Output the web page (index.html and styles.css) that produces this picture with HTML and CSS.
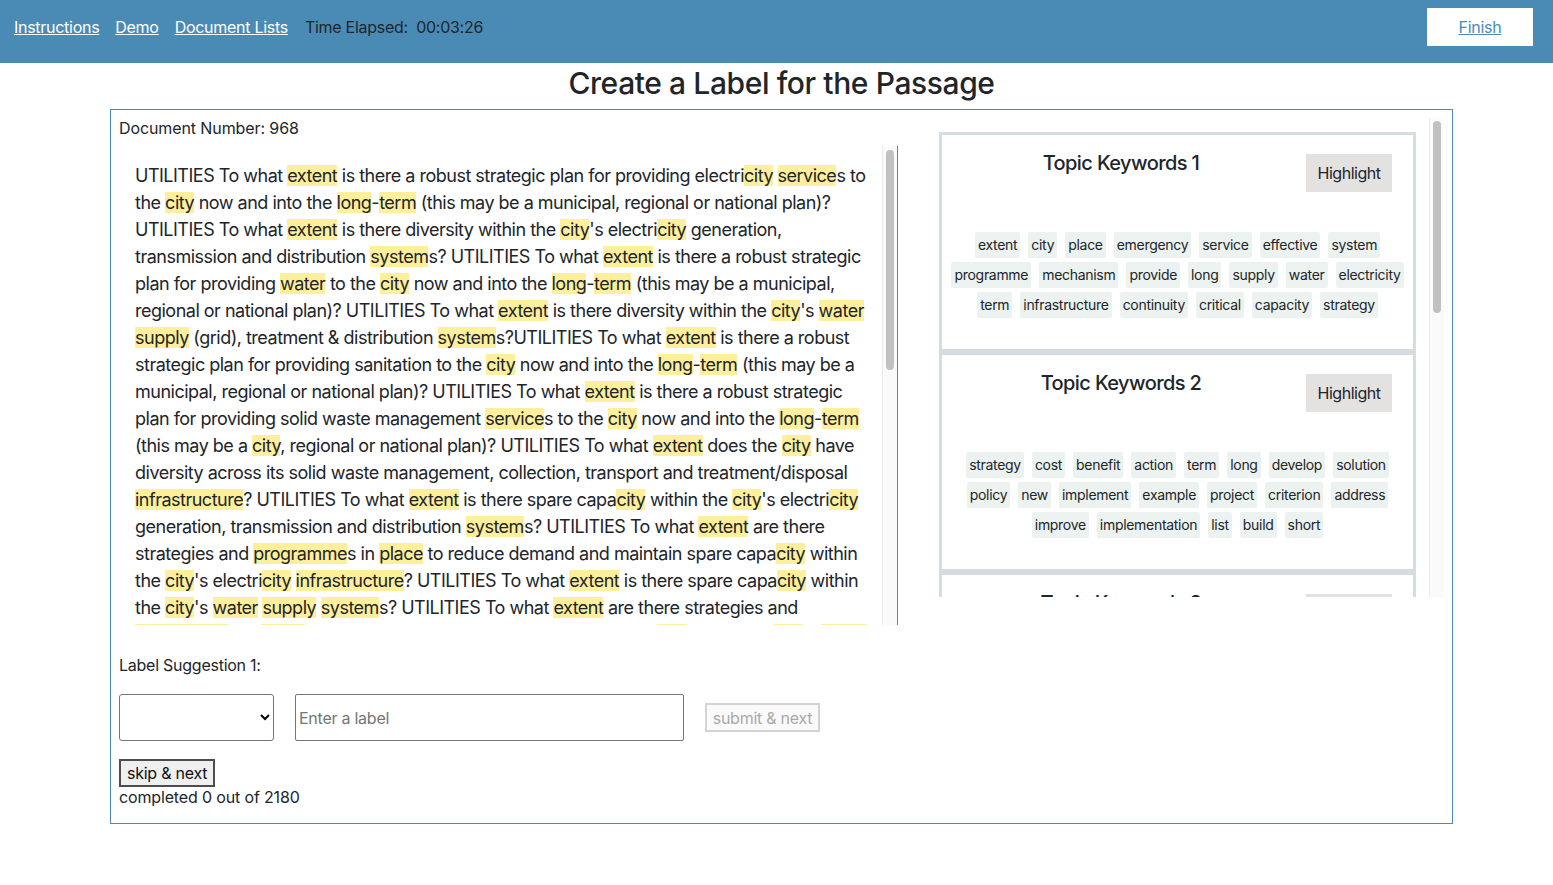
FILE: index.html
```html
<!DOCTYPE html>
<html lang="en">
<head>
<meta charset="utf-8">
<title>Create a Label for the Passage</title>
<link rel="stylesheet" href="styles.css">
</head>
<body class="page">
<header class="topbar">
  <nav class="nav">
    <a href="#" class="nav-link">Instructions</a>
    <a href="#" class="nav-link">Demo</a>
    <a href="#" class="nav-link">Document Lists</a>
    <span class="timer">Time Elapsed:&nbsp; 00:03:26</span>
  </nav>
  <button class="finish" type="button"><span class="finish-text">Finish</span></button>
</header>
<h1 class="title">Create a Label for the Passage</h1>
<main class="panel">
  <div class="row">
    <section class="doc-col">
      <div class="doc-num">Document Number: 968</div>
      <div class="doc-wrap">
      <div class="doc-text">UTILITIES To what <mark class="k">extent</mark> is there a robust strategic plan for providing electri<mark class="k">city</mark> <mark class="k">service</mark>s to the <mark class="k">city</mark> now and into the <mark class="k">long</mark>-<mark class="k">term</mark> (this may be a municipal, regional or national plan)? UTILITIES To what <mark class="k">extent</mark> is there diversity within the <mark class="k">city</mark>'s electri<mark class="k">city</mark> generation, transmission and distribution <mark class="k">system</mark>s? UTILITIES To what <mark class="k">extent</mark> is there a robust strategic plan for providing <mark class="k">water</mark> to the <mark class="k">city</mark> now and into the <mark class="k">long</mark>-<mark class="k">term</mark> (this may be a municipal, regional or national plan)? UTILITIES To what <mark class="k">extent</mark> is there diversity within the <mark class="k">city</mark>'s <mark class="k">water</mark> <mark class="k">supply</mark> (grid), treatment &amp; distribution <mark class="k">system</mark>s?UTILITIES To what <mark class="k">extent</mark> is there a robust strategic plan for providing sanitation to the <mark class="k">city</mark> now and into the <mark class="k">long</mark>-<mark class="k">term</mark> (this may be a municipal, regional or national plan)? UTILITIES To what <mark class="k">extent</mark> is there a robust strategic plan for providing solid waste management <mark class="k">service</mark>s to the <mark class="k">city</mark> now and into the <mark class="k">long</mark>-<mark class="k">term</mark> (this may be a <mark class="k">city</mark>, regional or national plan)? UTILITIES To what <mark class="k">extent</mark> does the <mark class="k">city</mark> have diversity across its solid waste management, collection, transport and treatment/disposal <mark class="k">infrastructure</mark>? UTILITIES To what <mark class="k">extent</mark> is there spare capa<mark class="k">city</mark> within the <mark class="k">city</mark>'s electri<mark class="k">city</mark> generation, transmission and distribution <mark class="k">system</mark>s? UTILITIES To what <mark class="k">extent</mark> are there strategies and <mark class="k">programme</mark>s in <mark class="k">place</mark> to reduce demand and maintain spare capa<mark class="k">city</mark> within the <mark class="k">city</mark>'s electri<mark class="k">city</mark> <mark class="k">infrastructure</mark>? UTILITIES To what <mark class="k">extent</mark> is there spare capa<mark class="k">city</mark> within the <mark class="k">city</mark>'s <mark class="k">water</mark> <mark class="k">supply</mark> <mark class="k">system</mark>s? UTILITIES To what <mark class="k">extent</mark> are there strategies and <mark class="k">programme</mark>s in <mark class="k">place</mark> to reduce demand and maintain spare capa<mark class="k">city</mark> within the <mark class="k">city</mark>'s <mark class="k">water</mark> <mark class="k">supply</mark> <mark class="k">infrastructure</mark>? UTILITIES To what <mark class="k">extent</mark> is there spare capa<mark class="k">city</mark> within the <mark class="k">city</mark>'s sanitation <mark class="k">system</mark>s? UTILITIES To what <mark class="k">extent</mark> are there strategies and <mark class="k">programme</mark>s in <mark class="k">place</mark> to reduce demand and maintain spare capa<mark class="k">city</mark> within the <mark class="k">city</mark>'s sanitation <mark class="k">infrastructure</mark>? UTILITIES To what <mark class="k">extent</mark> is there spare capa<mark class="k">city</mark> within the <mark class="k">city</mark>'s solid waste management <mark class="k">system</mark>s? UTILITIES To what <mark class="k">extent</mark> are there strategies and <mark class="k">programme</mark>s in <mark class="k">place</mark> to reduce waste generation and maintain spare capa<mark class="k">city</mark> within the <mark class="k">city</mark>'s solid waste <mark class="k">infrastructure</mark>? UTILITIES To what <mark class="k">extent</mark> does the <mark class="k">city</mark> have <mark class="k">emergency</mark> <mark class="k">supply</mark> arrangements for <mark class="k">critical</mark> <mark class="k">service</mark>s? UTILITIES To what <mark class="k">extent</mark> are there <mark class="k">effective</mark> <mark class="k">mechanism</mark>s to <mark class="k">provide</mark> <mark class="k">continuity</mark> of electri<mark class="k">city</mark> <mark class="k">supply</mark> to <mark class="k">critical</mark> assets during an <mark class="k">emergency</mark>? UTILITIES To what <mark class="k">extent</mark> are there <mark class="k">effective</mark> <mark class="k">mechanism</mark>s to <mark class="k">provide</mark> <mark class="k">continuity</mark> of <mark class="k">water</mark> <mark class="k">supply</mark> to <mark class="k">critical</mark> assets during an <mark class="k">emergency</mark>? UTILITIES To what <mark class="k">extent</mark> are there <mark class="k">effective</mark> <mark class="k">mechanism</mark>s to <mark class="k">provide</mark> <mark class="k">continuity</mark> of sanitation <mark class="k">service</mark>s during an <mark class="k">emergency</mark>? UTILITIES To what <mark class="k">extent</mark> are there <mark class="k">effective</mark> <mark class="k">mechanism</mark>s to <mark class="k">provide</mark> <mark class="k">continuity</mark> of solid waste management <mark class="k">service</mark>s during an <mark class="k">emergency</mark>? UTILITIES To what <mark class="k">extent</mark> is there a <mark class="k">strategy</mark> to maintain the <mark class="k">continuity</mark> of <mark class="k">critical</mark> <mark class="k">infrastructure</mark> across the <mark class="k">city</mark> in the <mark class="k">long</mark>-<mark class="k">term</mark>?</div>
      <div class="vscroll"><div class="vthumb doc-thumb"></div></div>
      </div>
    </section>
    <section class="topics-wrap">
      <div class="topics">
        <div class="card">
          <div class="card-head"><h2 class="card-title">Topic Keywords 1</h2><button class="hl-btn" type="button">Highlight</button></div>
          <div class="chips"><span class="chip">extent</span><span class="chip">city</span><span class="chip">place</span><span class="chip">emergency</span><span class="chip">service</span><span class="chip">effective</span><span class="chip">system</span><span class="chip">programme</span><span class="chip">mechanism</span><span class="chip">provide</span><span class="chip">long</span><span class="chip">supply</span><span class="chip">water</span><span class="chip">electricity</span><span class="chip">term</span><span class="chip">infrastructure</span><span class="chip">continuity</span><span class="chip">critical</span><span class="chip">capacity</span><span class="chip">strategy</span></div>
        </div>
        <div class="card">
          <div class="card-head"><h2 class="card-title">Topic Keywords 2</h2><button class="hl-btn" type="button">Highlight</button></div>
          <div class="chips"><span class="chip">strategy</span><span class="chip">cost</span><span class="chip">benefit</span><span class="chip">action</span><span class="chip">term</span><span class="chip">long</span><span class="chip">develop</span><span class="chip">solution</span><span class="chip">policy</span><span class="chip">new</span><span class="chip">implement</span><span class="chip">example</span><span class="chip">project</span><span class="chip">criterion</span><span class="chip">address</span><span class="chip">improve</span><span class="chip">implementation</span><span class="chip">list</span><span class="chip">build</span><span class="chip">short</span></div>
        </div>
        <div class="card">
          <div class="card-head"><h2 class="card-title">Topic Keywords 3</h2><button class="hl-btn" type="button">Highlight</button></div>
          <div class="chips"><span class="chip">risk</span><span class="chip">assessment</span><span class="chip">hazard</span><span class="chip">flood</span><span class="chip">climate</span><span class="chip">change</span><span class="chip">resilience</span><span class="chip">vulnerability</span><span class="chip">impact</span><span class="chip">scenario</span><span class="chip">event</span><span class="chip">data</span><span class="chip">model</span><span class="chip">exposure</span><span class="chip">damage</span><span class="chip">loss</span><span class="chip">population</span><span class="chip">area</span><span class="chip">map</span><span class="chip">future</span></div>
        </div>
        <div class="card">
          <div class="card-head"><h2 class="card-title">Topic Keywords 4</h2><button class="hl-btn" type="button">Highlight</button></div>
          <div class="chips"><span class="chip">community</span><span class="chip">public</span><span class="chip">awareness</span><span class="chip">stakeholder</span><span class="chip">engagement</span><span class="chip">communication</span><span class="chip">information</span><span class="chip">education</span><span class="chip">training</span><span class="chip">group</span><span class="chip">local</span><span class="chip">organisation</span><span class="chip">network</span><span class="chip">support</span><span class="chip">participation</span><span class="chip">citizen</span><span class="chip">campaign</span><span class="chip">volunteer</span><span class="chip">role</span></div>
        </div>
      </div>
      <div class="vscroll"><div class="vthumb topic-thumb"></div></div>
    </section>
  </div>
  <div class="label-title">Label Suggestion 1:</div>
  <div class="form-row">
    <select class="label-select"><option value=""></option></select>
    <input class="label-input" type="text" placeholder="Enter a label">
    <button class="submit-btn" type="button" disabled>submit &amp; next</button>
  </div>
  <button class="skip-btn" type="button">skip &amp; next</button>
  <div class="completed">completed 0 out of 2180</div>
</main>
</body>
</html>
```

FILE: styles.css
```css
.page {
  margin: 0;
  font-family: "Inter", "Noto Sans", sans-serif;
  color: #212529;
  background: #ffffff;
}

.topbar {
  height: 63px;
  box-sizing: border-box;
  background: #4a8bb6;
  display: flex;
  justify-content: space-between;
  align-items: flex-start;
  padding: 8px 20px 0 14px;
}

.nav {
  display: flex;
  gap: 16px;
  margin-top: 7px;
  font-size: 16px;
  line-height: 24px;
  letter-spacing: -0.28px;
}

.nav-link {
  color: #ffffff;
  text-decoration: underline;
}

.timer {
  color: #212529;
  margin-left: 1px;
}

.finish {
  height: 38px;
  width: 106px;
  background: #ffffff;
  border: none;
  padding: 0;
  font-family: "Inter", "Noto Sans", sans-serif;
  font-size: 16px;
  letter-spacing: -0.3px;
  color: #4a8bb6;
  cursor: pointer;
}

.finish-text {
  text-decoration: underline;
}

.title {
  margin: 2px 0 8px;
  padding-left: 10px;
  text-align: center;
  font-size: 30px;
  line-height: 36px;
  font-weight: 500;
  letter-spacing: -0.4px;
  color: #212529;
}

.panel {
  display: block;
  margin-left: 110px;
  width: 1343px;
  box-sizing: border-box;
  border: 1px solid #4a8bb6;
  padding: 8px 8px 16px;
}

.row {
  display: flex;
}

.doc-col {
  width: 779px;
  flex: none;
}

.doc-num {
  font-size: 16px;
  line-height: 20px;
  letter-spacing: -0.1px;
}

.doc-wrap {
  margin-top: 8px;
  height: 479px;
  display: flex;
  border-right: 1px solid #4a8bb6;
}

.doc-text {
  flex: 1;
  overflow: hidden;
  padding: 16px 11px 15px 16px;
  font-size: 18px;
  line-height: 27px;
  letter-spacing: -0.5px;
}

.k {
  background: #fdef9b;
  color: inherit;
}

.vscroll {
  width: 15px;
  flex: none;
  box-sizing: border-box;
  background: #fafafa;
  border-left: 1px solid #ececec;
  padding: 4px 3px 0 3px;
}

.vthumb {
  background: #c1c1c1;
  border-radius: 4px;
}

.doc-thumb {
  height: 220px;
}

.topic-thumb {
  height: 192px;
  margin-top: -1px;
}

.topics-wrap {
  flex: 1;
  height: 479px;
  display: flex;
}

.topics {
  flex: 1;
  overflow: hidden;
  padding: 14px 13px 0 41px;
}

.card {
  height: 220px;
  box-sizing: border-box;
  border: 3px solid #d6dde1;
}

.card-head {
  display: flex;
  align-items: flex-start;
  gap: 6px;
  padding: 16px 21px 0 0;
}

.card-title {
  flex: 1;
  margin: 0;
  text-align: center;
  font-size: 20px;
  line-height: 24px;
  font-weight: 500;
  letter-spacing: -0.6px;
}

.hl-btn {
  margin-top: 3px;
  width: 86px;
  height: 38px;
  background: #e4e1e1;
  border: none;
  font-family: "Inter", "Noto Sans", sans-serif;
  font-size: 16px;
  letter-spacing: -0.5px;
  color: #212529;
  padding: 0;
}

.chips {
  margin-top: 38px;
  display: flex;
  flex-wrap: wrap;
  justify-content: center;
  padding: 0;
}

.chip {
  margin: 2px 4px;
  padding: 4px 3px;
  font-size: 14px;
  line-height: 18px;
  letter-spacing: -0.3px;
  background: #ecf2ef;
  border-radius: 2px;
}

.label-title {
  margin-top: 30px;
  font-size: 16px;
  line-height: 20px;
  letter-spacing: -0.25px;
}

.form-row {
  margin-top: 19px;
  display: flex;
  align-items: center;
  gap: 21px;
}

.label-select {
  width: 155px;
  height: 47px;
  border: 1px solid #767676;
  border-radius: 3px;
  background: #ffffff;
  font-family: "Inter", "Noto Sans", sans-serif;
  font-size: 16px;
}

.label-input {
  width: 389px;
  height: 47px;
  box-sizing: border-box;
  border: 1px solid #767676;
  border-radius: 2px;
  padding: 0 3px;
  font-family: "Inter", "Noto Sans", sans-serif;
  font-size: 16px;
  letter-spacing: -0.25px;
  color: #212529;
}

.label-input::placeholder {
  color: #757575;
}

.submit-btn {
  height: 29px;
  width: 115px;
  box-sizing: border-box;
  border: 2px solid #d3d3d3;
  background: #fafafa;
  color: #a9a9a9;
  font-family: "Inter", "Noto Sans", sans-serif;
  font-size: 16px;
  letter-spacing: -0.25px;
  padding: 0;
}

.skip-btn {
  display: block;
  margin-top: 18px;
  height: 28px;
  box-sizing: border-box;
  padding: 0 6px;
  border: 2px solid #4d4d4d;
  background: #efefef;
  color: #111111;
  font-family: "Inter", "Noto Sans", sans-serif;
  font-size: 16px;
  letter-spacing: -0.25px;
  line-height: 20px;
}

.completed {
  font-size: 16px;
  line-height: 20px;
  letter-spacing: -0.15px;
}
```
